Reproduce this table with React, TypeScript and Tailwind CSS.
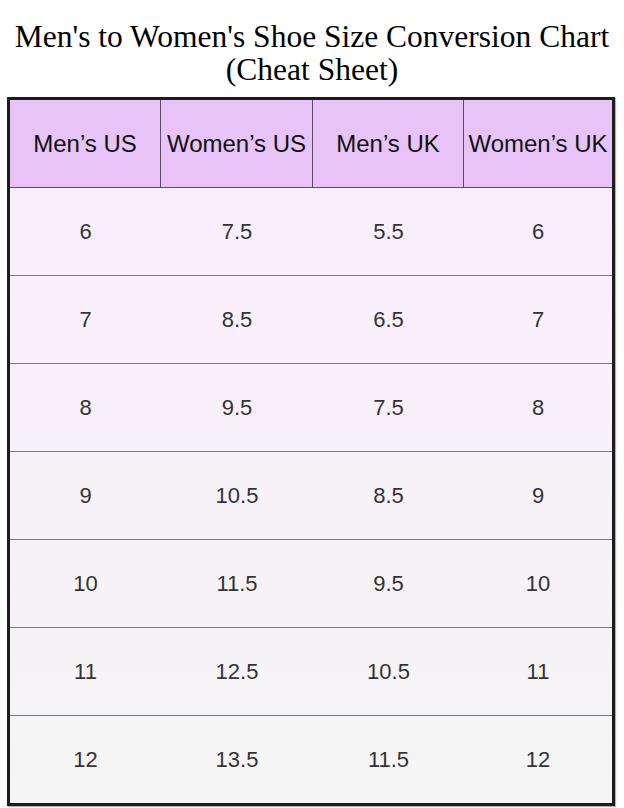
const headers = ["Men’s US", "Women’s US", "Men’s UK", "Women’s UK"];

const rows = [
  ["6", "7.5", "5.5", "6"],
  ["7", "8.5", "6.5", "7"],
  ["8", "9.5", "7.5", "8"],
  ["9", "10.5", "8.5", "9"],
  ["10", "11.5", "9.5", "10"],
  ["11", "12.5", "10.5", "11"],
  ["12", "13.5", "11.5", "12"],
];

const App = () => {
  return (
    <div className="w-[624px] h-[808px] bg-white overflow-hidden">
      <h1 className="pt-[20px] pb-[11px] text-center text-[31.5px] leading-[33px] text-black font-['Liberation_Serif',serif]">
        Men's to Women's Shoe Size Conversion Chart
        <br />
        (Cheat Sheet)
      </h1>

      <div className="ml-[7px] mr-[9px] border-[3px] border-[#1c1c1c] shadow-[1px_1px_1px_rgba(0,0,0,0.3)] font-['Liberation_Sans',Arial,sans-serif]">
        <div className="grid grid-cols-[151px_152px_151px_1fr] h-[88px] bg-[#e8c3f8] border-b border-[#5b4a66]">
          {headers.map((h, i) => (
            <div
              key={h}
              className={`flex items-center justify-center text-[24px] text-[#111] ${
                i < 3 ? "border-r border-[#5b4a66]" : ""
              }`}
            >
              {h}
            </div>
          ))}
        </div>

        <div className="bg-linear-to-b from-[#f9eefc] to-[#f5f5f5]">
          {rows.map((r, ri) => (
            <div
              key={ri}
              className={`grid grid-cols-[151px_152px_151px_1fr] ${
                ri < rows.length - 1 ? "h-[88px] border-b border-[#777]" : "h-[87px]"
              }`}
            >
              {r.map((v, ci) => (
                <div key={ci} className="flex items-center justify-center text-[22px] text-[#333]">
                  {v}
                </div>
              ))}
            </div>
          ))}
        </div>
      </div>
    </div>
  );
};

export default App;
